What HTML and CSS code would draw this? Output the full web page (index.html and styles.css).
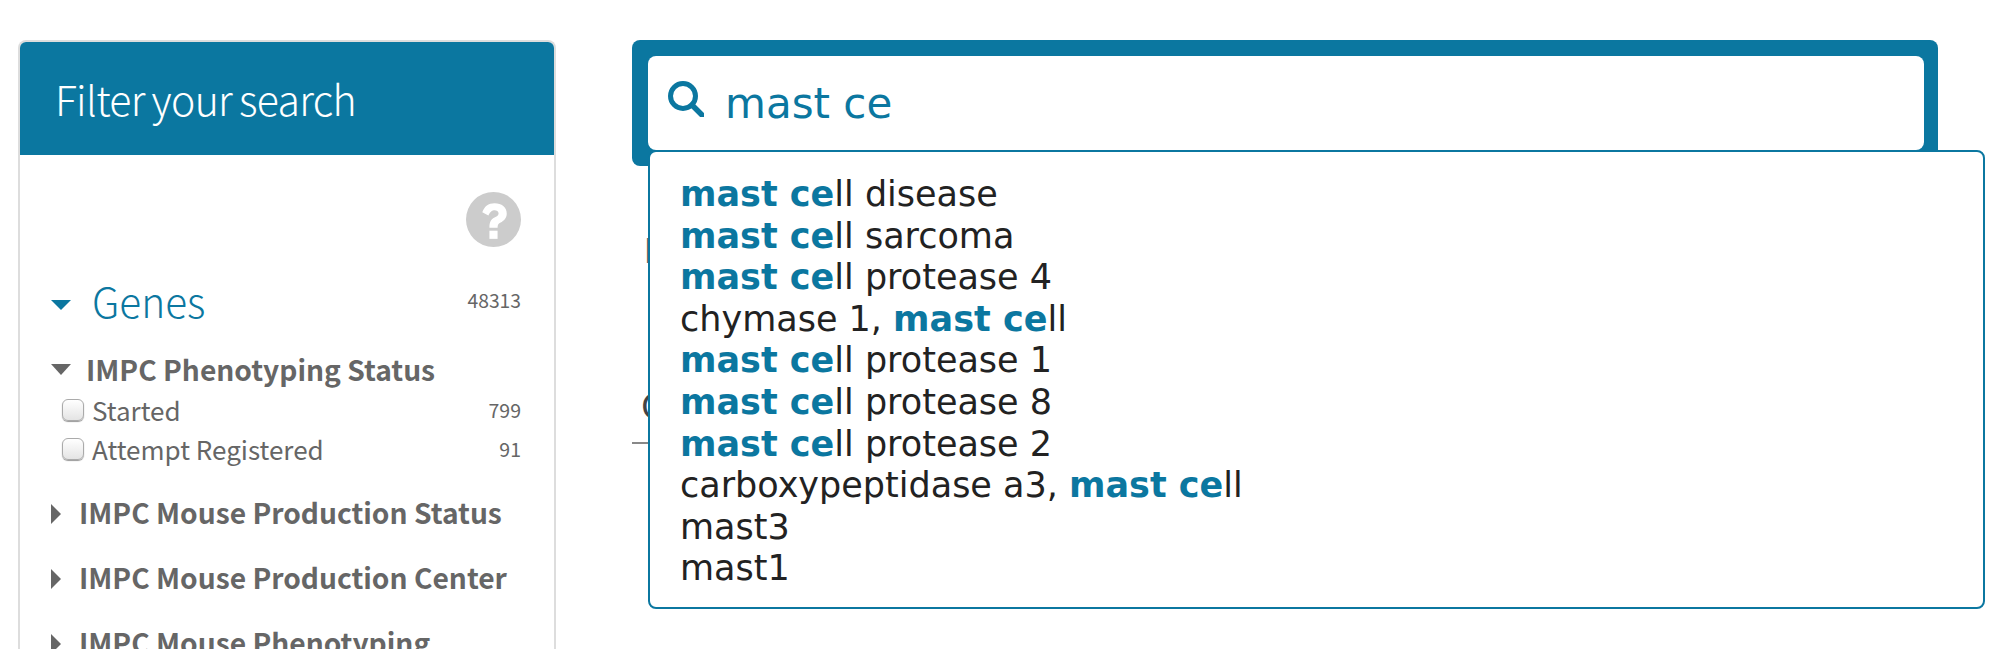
FILE: index.html
```html
<!DOCTYPE html>
<html lang="en">
<head>
<meta charset="utf-8">
<title>Search</title>
<link rel="stylesheet" href="styles.css">
</head>
<body>
<div class="page">
  <aside class="panel">
    <h2 class="panel-title">Filter your search</h2>
    <div class="panel-body">
      <div class="help-row">
        <svg class="help" viewBox="0 0 54 54"><circle cx="27" cy="27" r="27" fill="#ccc"/><path d="M16 20c2-6 6-9 12-9 7 0 12 4 12 10 0 5-3 7-6 9-2 1-3 2-3 5h-8c0-5 1-8 5-10 2-1 4-2 4-4s-2-3-4-3-4 1-6 5z" fill="#fff"/><rect x="23" y="38" width="8" height="8" fill="#fff"/></svg>
      </div>
      <div class="facet-head">
        <span class="tri-down blue"></span>
        <span class="facet-name">Genes</span>
        <span class="facet-count">48313</span>
      </div>
      <div class="sub-head open"><span class="tri-down grey"></span>IMPC Phenotyping Status</div>
      <label class="check-row"><input class="check" type="checkbox"><span class="check-label">Started</span><span class="check-count">799</span></label>
      <label class="check-row"><input class="check" type="checkbox"><span class="check-label">Attempt Registered</span><span class="check-count">91</span></label>
      <div class="sub-head closed first"><span class="tri-right"></span>IMPC Mouse Production Status</div>
      <div class="sub-head closed"><span class="tri-right"></span>IMPC Mouse Production Center</div>
      <div class="sub-head closed"><span class="tri-right"></span>IMPC Mouse Phenotyping</div>
    </div>
  </aside>
  <main class="main">
    <div class="search-wrap">
      <div class="search-outer">
        <div class="search-inner">
          <svg class="search-icon" viewBox="0 0 36 36"><circle cx="15" cy="15" r="12.5" fill="none" stroke="#0b77a0" stroke-width="5"/><path d="M24 24l10 10" stroke="#0b77a0" stroke-width="5.5" stroke-linecap="round"/></svg>
          <span class="search-text">mast ce</span>
        </div>
      </div>
      <ul class="suggest">
        <li><b>mast ce</b>ll disease</li>
        <li><b>mast ce</b>ll sarcoma</li>
        <li><b>mast ce</b>ll protease 4</li>
        <li>chymase 1, <b>mast ce</b>ll</li>
        <li><b>mast ce</b>ll protease 1</li>
        <li><b>mast ce</b>ll protease 8</li>
        <li><b>mast ce</b>ll protease 2</li>
        <li>carboxypeptidase a3, <b>mast ce</b>ll</li>
        <li>mast3</li>
        <li>mast1</li>
      </ul>
    </div>
    <p class="under-title">Found</p>
    <p class="under-text">C</p>
    <div class="under-rule"></div>
  </main>
</div>
</body>
</html>
```
FILE: styles.css
```css
html, body { margin: 0; padding: 0; background: #fff; height: 649px; overflow: hidden; }
.page { display: flex; align-items: flex-start; padding: 40px 0 0 18px; font-family: "Noto Sans CJK SC", "Noto Sans", sans-serif; }
.panel { width: 538px; height: 640px; flex: none; box-sizing: border-box; border: 2px solid #ddd; border-bottom: 0; border-radius: 8px 8px 0 0; overflow: hidden; }
.panel-title { margin: 0; height: 113px; padding-left: 35px; background: #0b77a0; color: #fff; font-size: 41px; font-weight: 300; line-height: 113px; letter-spacing: -0.7px; word-spacing: -1.5px; }
.panel-body { padding: 38px 33px 0 31px; color: #666; }
.help-row { display: flex; justify-content: flex-end; }
.help { width: 55px; height: 55px; margin-top: -1px; display: block; }
.facet-head { display: flex; align-items: center; margin-top: 28px; height: 50px; }
.tri-down { display: inline-block; width: 0; height: 0; border-left: 10px solid transparent; border-right: 10px solid transparent; }
.tri-down.blue { border-top: 10px solid #0b77a0; margin-top: 10px; }
.tri-down.grey { border-top: 11px solid #666; margin-right: 15px; vertical-align: 6px; }
.facet-name { margin-left: 21px; font-size: 40.6px; font-weight: 300; color: #0b77a0; }
.facet-count { margin-left: auto; font-size: 19.3px; color: #666; }
.sub-head { font-size: 28.2px; font-weight: 700; color: #666; line-height: 40px; white-space: nowrap; }
.sub-head.open { margin-top: 24px; margin-bottom: 1px; }
.sub-head.closed { margin-top: 25px; }
.sub-head.first { margin-top: 24px; }
.tri-right { display: inline-block; width: 0; height: 0; border-top: 10px solid transparent; border-bottom: 10px solid transparent; border-left: 10px solid #666; margin-right: 18px; }
.check-row { display: flex; align-items: center; height: 39px; font-size: 26px; color: #666; }
.check { appearance: none; -webkit-appearance: none; margin: 0 8px 0 11px; width: 22px; height: 22px; box-sizing: border-box; border: 1px solid #aaa; border-radius: 6px; background: linear-gradient(#fff, #e4e4e4); box-shadow: 0 1px 1px #999; }
.check-count { margin-left: auto; font-size: 19.5px; }
.main { margin-left: 76px; width: 1353px; flex: none; }
.search-wrap { position: relative; }
.search-outer { box-sizing: border-box; width: 1306px; height: 126px; padding: 16px 14px 16px 16px; background: #0b77a0; border-radius: 8px; }
.search-inner { display: flex; align-items: center; height: 94px; padding-left: 20px; background: #fff; border-radius: 8px; box-sizing: border-box; }
.search-icon { width: 36px; height: 36px; margin-top: -8px; }
.search-text { margin-left: 21px; font-family: "DejaVu Sans", sans-serif; font-size: 42px; color: #0b77a0; }
.suggest { position: absolute; left: 16px; top: 110px; box-sizing: border-box; width: 1337px; height: 459px; margin: 0; padding: 22px 0 0 30px; list-style: none; background: #fff; border: 2px solid #0b77a0; border-radius: 8px; font-family: "DejaVu Sans", sans-serif; font-size: 35px; line-height: 41.6px; color: #222; }
.suggest b { color: #0b77a0; font-weight: 700; }
.under-title { margin: 72px 0 0 12px; font-size: 33px; font-weight: 700; line-height: 22px; color: #666; }
.under-text { margin: 130px 0 0 9px; font-size: 36px; line-height: 26px; color: #444; }
.under-rule { margin: 26px 0 0 0; width: 20px; height: 2px; background: #888; }
```
